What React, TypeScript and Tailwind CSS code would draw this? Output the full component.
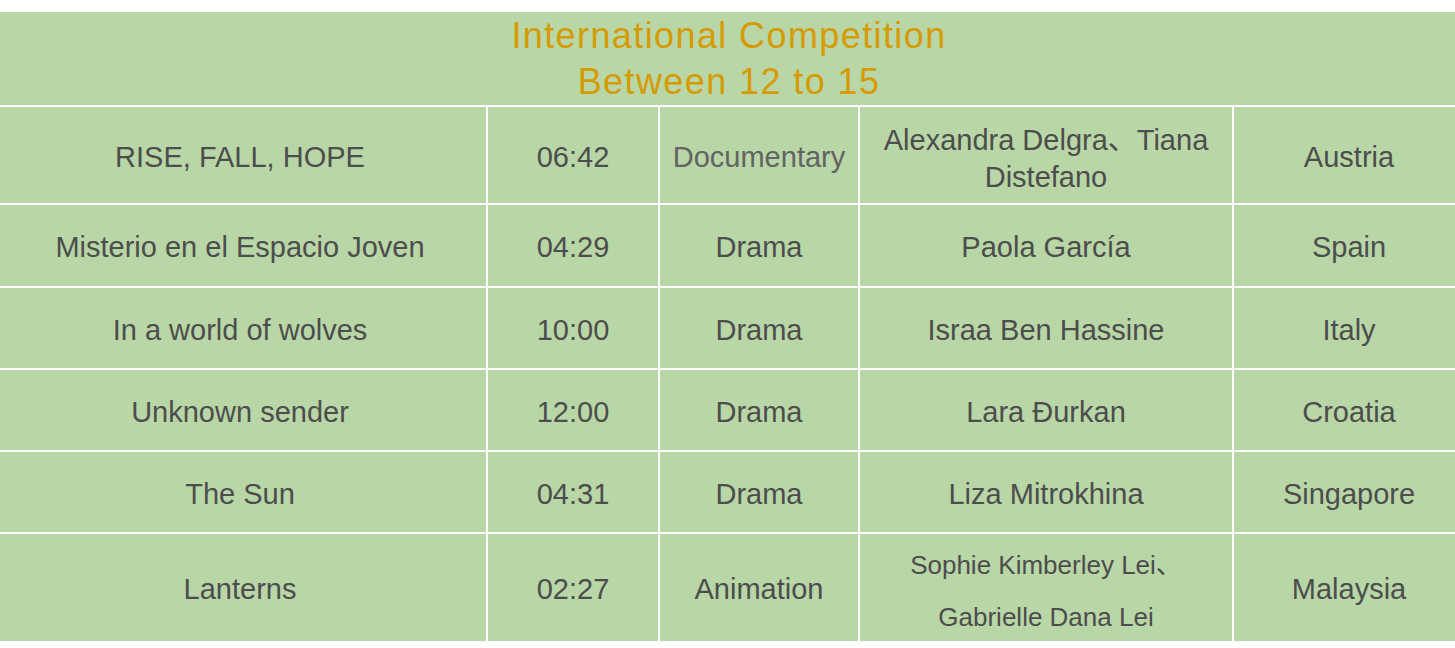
import React from "react";

const font = { fontFamily: '"Liberation Sans", Arial, Helvetica, "Noto Sans CJK SC", sans-serif' };

type Row = { title: string; time: string; genre: React.ReactNode; director: React.ReactNode; country: string; h: string };

const rows: Row[] = [
  {
    title: "RISE, FALL, HOPE",
    time: "06:42",
    genre: <span className="text-[#636363]">Documentary</span>,
    director: (
      <span className="leading-[37px] pt-[4px]">
        Alexandra Delgra、Tiana
        <br />
        Distefano
      </span>
    ),
    country: "Austria",
    h: "h-[96px]",
  },
  { title: "Misterio en el Espacio Joven", time: "04:29", genre: "Drama", director: "Paola García", country: "Spain", h: "h-[81px]" },
  { title: "In a world of wolves", time: "10:00", genre: "Drama", director: "Israa Ben Hassine", country: "Italy", h: "h-[80px]" },
  { title: "Unknown sender", time: "12:00", genre: "Drama", director: "Lara Đurkan", country: "Croatia", h: "h-[80px]" },
  { title: "The Sun", time: "04:31", genre: "Drama", director: "Liza Mitrokhina", country: "Singapore", h: "h-[80px]" },
  {
    title: "Lanterns",
    time: "02:27",
    genre: "Animation",
    director: (
      <span className="text-[26px] leading-[52px] pt-[4px]">
        Sophie Kimberley Lei、
        <br />
        Gabrielle Dana Lei
      </span>
    ),
    country: "Malaysia",
    h: "h-[107px]",
  },
];

function Cell({ children, h }: { children: React.ReactNode; h: string }) {
  return (
    <div className={`${h} bg-[#b8d6a6] flex items-center justify-center text-center text-[29px] leading-[34px] text-[#4d4d4d] pt-[3px]`}>
      {children}
    </div>
  );
}

export default function App() {
  return (
    <div className="w-[1455px] h-[648px] bg-white pt-[12px] overflow-hidden" style={font}>
      <div className="ml-[-6px] grid grid-cols-[492px_170px_198px_372px_230px] gap-[2px] bg-white w-[1470px]">
        <div className="col-span-5 h-[93px] bg-[#b8d6a6] flex flex-col items-center justify-center text-[36px] leading-[46px] tracking-[1.4px] text-[#d59b00]">
          <div>International Competition</div>
          <div>Between 12 to 15</div>
        </div>
        {rows.map((r, i) => (
          <React.Fragment key={i}>
            <Cell h={r.h}>{r.title}</Cell>
            <Cell h={r.h}>{r.time}</Cell>
            <Cell h={r.h}>{r.genre}</Cell>
            <Cell h={r.h}>{r.director}</Cell>
            <Cell h={r.h}>{r.country}</Cell>
          </React.Fragment>
        ))}
      </div>
    </div>
  );
}
